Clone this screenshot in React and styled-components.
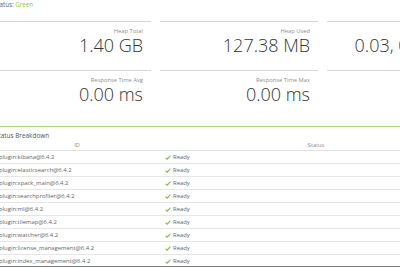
import React from "react";
import styled, { createGlobalStyle } from "styled-components";

const Global = createGlobalStyle`
  html, body { margin: 0; padding: 0; background: #fff; }
  body { font-family: "Open Sans", "Liberation Sans", sans-serif; overflow: hidden; }
`;

const Frame = styled.div`
  height: 100vh;
  box-sizing: border-box;
  border-bottom: 1px solid #7d7d7d;
  overflow: hidden;
`;

const Page = styled.div`
  width: 484px;
  margin-left: -6px;
`;

const OverallStatus = styled.div`
  font-size: 6.2px;
  line-height: 9px;
  color: #666;
  margin-bottom: 12px;
`;

const StateText = styled.span`
  color: ${(p) => p.$color};
`;

const Cards = styled.div`
  display: grid;
  grid-template-columns: 157px 158px 158px;
  column-gap: 9px;
  margin-bottom: 7px;
`;

const Card = styled.div`
  height: 49px;
  box-sizing: border-box;
  border-top: 1px solid #d6d6d6;
  padding: 5px 8px 0 8px;
  text-align: right;
`;

const CardLabel = styled.div`
  font-size: 5.8px;
  line-height: 8px;
  color: #8f8f8f;
`;

const CardValue = styled.div`
  margin-top: 2px;
  font-size: 18px;
  line-height: 16px;
  font-weight: 300;
  color: #343434;
  white-space: nowrap;
`;

const Breakdown = styled.section`
  border-top: 1px solid #a6d46e;
  padding-top: 4px;
`;

const SectionTitle = styled.div`
  font-size: 6.4px;
  line-height: 9px;
  color: #555;
  padding-left: 1px;
`;

const Table = styled.div`
  display: grid;
  grid-template-columns: 166px 312px;
`;

const HeadCell = styled.div`
  height: 10px;
  line-height: 10px;
  font-size: 5.6px;
  color: #8a8a8a;
  text-align: center;
  border-bottom: 1px solid #e2e2e2;
`;

const Cell = styled.div`
  height: 12px;
  line-height: 12px;
  font-size: 5.9px;
  color: #666;
  padding-left: ${(p) => p.$pad}px;
  border-bottom: 1px solid #e6e6e6;
  display: flex;
  align-items: center;
  gap: 2px;
  white-space: nowrap;
`;

const Check = () => (
  <svg width="6" height="5" viewBox="0 0 6 5">
    <path d="M0.6 2.7 L2.2 4.2 L5.4 0.7" fill="none" stroke="#86c24a" strokeWidth="1.2" />
  </svg>
);

const cards = [
  { label: "Heap Total", value: "1.40 GB" },
  { label: "Heap Used", value: "127.38 MB" },
  { label: "Load Average", value: "0.03, 0.05, 0.01" },
  { label: "Response Time Avg", value: "0.00 ms" },
  { label: "Response Time Max", value: "0.00 ms" },
  { label: "Requests Per Second", value: "0.00" },
];

const plugins = [
  "kibana",
  "elasticsearch",
  "xpack_main",
  "searchprofiler",
  "ml",
  "tilemap",
  "watcher",
  "license_management",
  "index_management",
  "timelion",
];

export default function App() {
  return (
    <Frame>
      <Global />
      <Page>
        <OverallStatus>
          Status: <StateText $color="#8cc63f">Green</StateText>
        </OverallStatus>
        <Cards>
          {cards.map((c) => (
            <Card key={c.label}>
              <CardLabel>{c.label}</CardLabel>
              <CardValue>{c.value}</CardValue>
            </Card>
          ))}
        </Cards>
        <Breakdown>
          <SectionTitle>Status Breakdown</SectionTitle>
          <Table>
            <HeadCell>ID</HeadCell>
            <HeadCell>Status</HeadCell>
            {plugins.map((p) => (
              <React.Fragment key={p}>
                <Cell $pad={5}>plugin:{p}@6.4.2</Cell>
                <Cell $pad={5}>
                  <Check />
                  Ready
                </Cell>
              </React.Fragment>
            ))}
          </Table>
        </Breakdown>
      </Page>
    </Frame>
  );
}
